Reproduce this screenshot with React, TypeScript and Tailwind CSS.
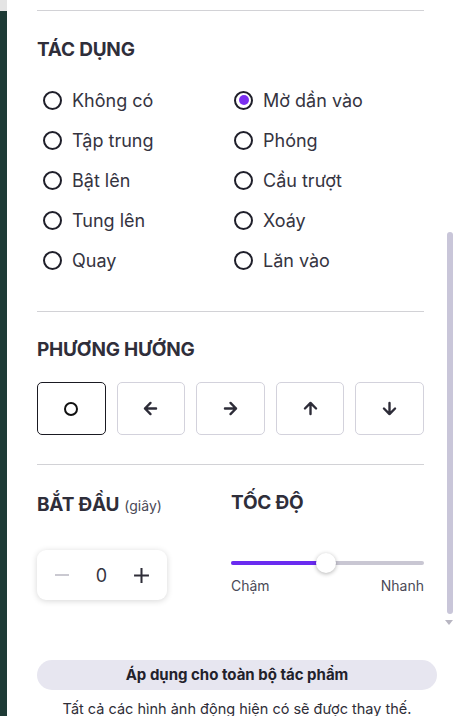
import React from "react";

const font = { fontFamily: "Inter, 'Noto Sans', sans-serif" };

function Radio({ label, checked }: { label: string; checked?: boolean }) {
  return (
    <div className="flex items-center h-[40px]">
      <div className="w-[19px] h-[19px] rounded-full border-2 border-[#1f1f2a] flex items-center justify-center ml-[6px]">
        {checked && <div className="w-[10px] h-[10px] rounded-full bg-[#7b2ff0]" />}
      </div>
      <span className="ml-[10px] text-[18px] text-[#35343f]">{label}</span>
    </div>
  );
}

function Arrow({ d }: { d: string }) {
  return (
    <svg width="19" height="19" viewBox="0 0 24 24" fill="none" stroke="#2d2c38" strokeWidth="3" strokeLinecap="round" strokeLinejoin="round">
      <path d={d} />
    </svg>
  );
}

export default function App() {
  const left = ["Không có", "Tập trung", "Bật lên", "Tung lên", "Quay"];
  const right = ["Mờ dần vào", "Phóng", "Cầu trượt", "Xoáy", "Lăn vào"];
  const btn = "flex-1 h-[53px] rounded-[5px] border flex items-center justify-center";
  const head = "h-[24px] flex items-center text-[19px] font-bold text-[#2f2e3a] tracking-[-0.2px]";
  return (
    <div className="w-[456px] h-[716px] bg-white flex overflow-hidden" style={font}>
      <div className="w-[7px] flex flex-col">
        <div className="h-[11px] bg-[#e4e4e4]" />
        <div className="flex-1 bg-[#1e3b36]" />
      </div>
      <div className="flex-1 relative flex flex-col">
        <div className="pl-[30px] pr-[32px] h-[640px] shrink-0">
          <div className="h-[10px]" />
          <div className="h-px bg-[#d2d2d6]" />
          <div className={"mt-[27px] " + head}>TÁC DỤNG</div>
          <div className="mt-[18px] grid grid-cols-[191px_1fr]">
            {left.map((l, i) => (
              <React.Fragment key={l}>
                <Radio label={l} />
                <Radio label={right[i]} checked={i === 0} />
              </React.Fragment>
            ))}
          </div>
          <div className="mt-[31px] h-px bg-[#d2d2d6]" />
          <div className={"mt-[26px] " + head}>PHƯƠNG HƯỚNG</div>
          <div className="mt-[20px] flex gap-[11px]">
            <div className={btn + " border-[#1a1a22]"}>
              <div className="w-[14px] h-[14px] rounded-full border-[2.5px] border-[#111]" />
            </div>
            <div className={btn + " border-[#d3d2dc]"}>
              <Arrow d="M19 12H5M12 19l-7-7 7-7" />
            </div>
            <div className={btn + " border-[#d3d2dc]"}>
              <Arrow d="M5 12h14M12 5l7 7-7 7" />
            </div>
            <div className={btn + " border-[#d3d2dc]"}>
              <Arrow d="M12 19V5M5 12l7-7 7 7" />
            </div>
            <div className={btn + " border-[#d3d2dc]"}>
              <Arrow d="M12 5v14M19 12l-7 7-7-7" />
            </div>
          </div>
          <div className="mt-[29px] h-px bg-[#d2d2d6]" />
          <div className="mt-[26px] flex">
            <div className="w-[194px]">
              <div className="h-[24px] flex items-baseline">
                <span className="text-[19px] font-bold text-[#2f2e3a] tracking-[-0.2px]">BẮT ĐẦU</span>
                <span className="ml-[5px] text-[14px] text-[#4a4956]">(giây)</span>
              </div>
              <div className="mt-[35px] w-[130px] h-[50px] rounded-[9px] bg-white shadow-[0_1px_6px_rgba(0,0,0,0.16)] flex items-center justify-between px-[17px]">
                <svg width="16" height="16" viewBox="0 0 16 16"><path d="M1 8h14" stroke="#c4c3cc" strokeWidth="1.8" /></svg>
                <span className="text-[18px] text-[#35343f]">0</span>
                <svg width="17" height="17" viewBox="0 0 16 16"><path d="M1 8h14M8 1v14" stroke="#2e2d38" strokeWidth="1.9" /></svg>
              </div>
            </div>
            <div className="flex-1">
              <div className={head}>TỐC ĐỘ</div>
              <div className="mt-[46px] relative h-[4px] rounded-full bg-[#c9c7d3]">
                <div className="absolute left-0 top-0 h-[4px] w-[95px] rounded-full bg-[#6a2bf0]" />
                <div className="absolute left-[85px] top-[-8px] w-[20px] h-[20px] rounded-full bg-white shadow-[0_1px_4px_rgba(0,0,0,0.3)]" />
              </div>
              <div className="mt-[10px] flex justify-between text-[14px] text-[#4b4a57]">
                <span>Chậm</span>
                <span>Nhanh</span>
              </div>
            </div>
          </div>
        </div>
        <div className="absolute right-[3px] top-[232px] w-[6px] h-[382px] rounded-full bg-[#c9c6d9]" />
        <div className="absolute right-[3px] top-[620px] w-0 h-0 border-l-[4px] border-r-[4px] border-t-[5px] border-l-transparent border-r-transparent border-t-[#b8b6c2]" />
        <div className="pl-[30px] pr-[19px] mt-[20px] shrink-0">
          <div className="h-[30px] rounded-full bg-[#e7e6f0] flex items-center justify-center text-[15px] font-bold text-[#22212b]">
            Áp dụng cho toàn bộ tác phẩm
          </div>
          <div className="mt-[8px] text-center text-[14.5px] text-[#2f2e38] whitespace-nowrap">
            Tất cả các hình ảnh động hiện có sẽ được thay thế.
          </div>
        </div>
      </div>
    </div>
  );
}
